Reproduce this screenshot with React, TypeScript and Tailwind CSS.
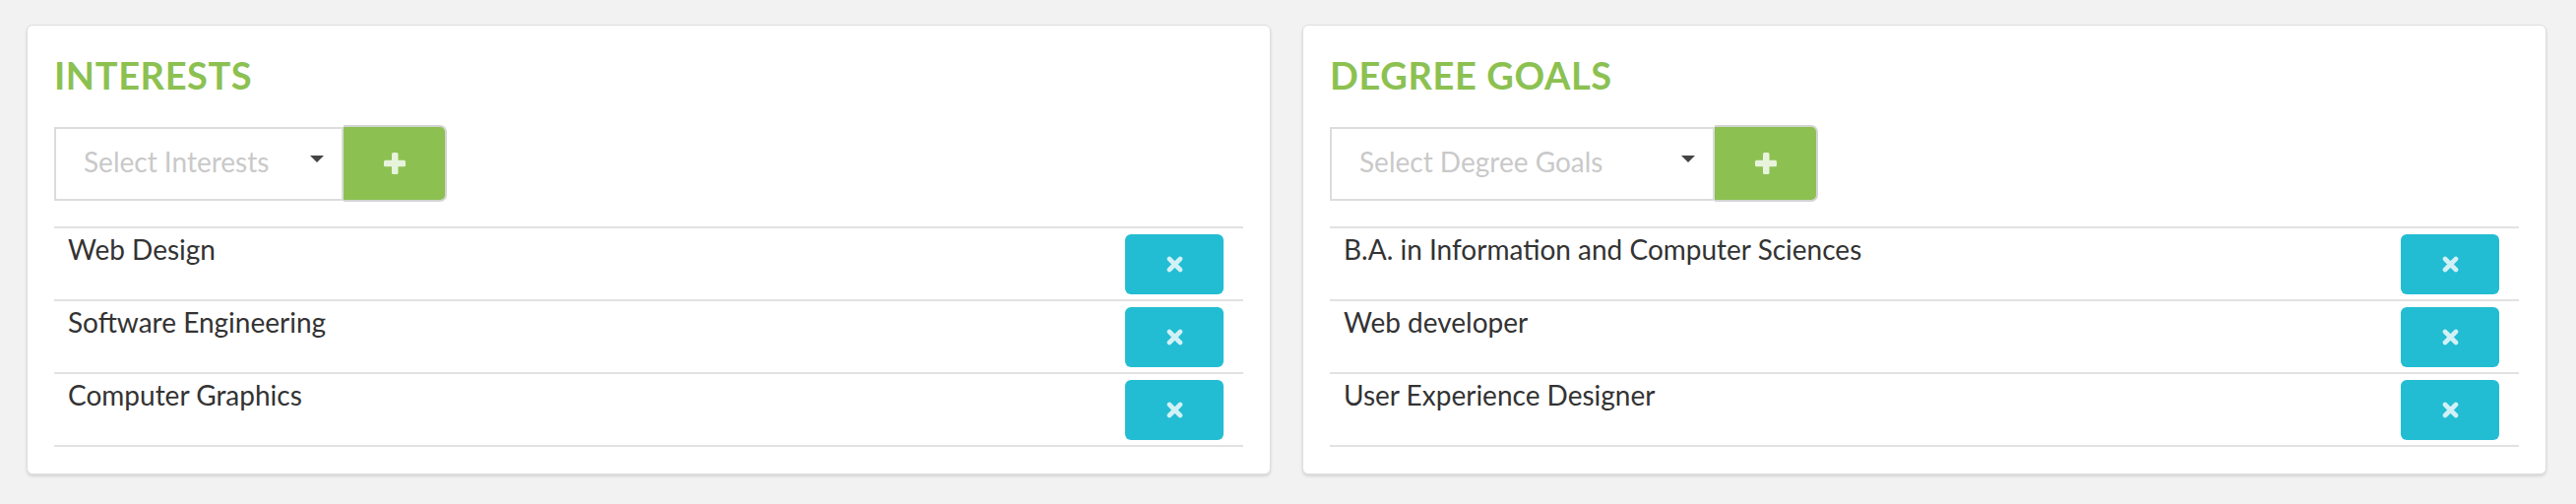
const panels = [
  {
    title: "INTERESTS",
    placeholder: "Select Interests",
    selectWidth: "w-[294px]",
    items: ["Web Design", "Software Engineering", "Computer Graphics"],
  },
  {
    title: "DEGREE GOALS",
    placeholder: "Select Degree Goals",
    selectWidth: "w-[391px]",
    items: [
      "B.A. in Information and Computer Sciences",
      "Web developer",
      "User Experience Designer",
    ],
  },
];

function PlusIcon() {
  return (
    <svg width="22" height="22" viewBox="0 0 22 22" fill="#e8f3dc">
      <rect x="8" y="0" width="6.5" height="22" rx="1.5" />
      <rect x="0" y="7.8" width="22" height="6.5" rx="1.5" />
    </svg>
  );
}

function TimesIcon() {
  return (
    <svg width="17" height="17" viewBox="0 0 17 17">
      <path
        d="M3 3 L14 14 M14 3 L3 14"
        stroke="#d2f1f6"
        strokeWidth="4.6"
        strokeLinecap="round"
      />
    </svg>
  );
}

function Panel({ title, placeholder, selectWidth, items }: (typeof panels)[number]) {
  return (
    <div className="w-[1264px] rounded-[6px] border border-[#dedede] bg-white px-[27px] pt-[30px] pb-[27px] shadow-[0_2px_3px_rgba(0,0,0,0.12)]">
      <h2 className="text-[38px] leading-[40px] font-bold tracking-[0.6px] text-[#8cc152]">{title}</h2>

      {/* select + add button */}
      <div className="mt-[31px] flex h-[78px] items-center">
        <div
          className={`${selectWidth} flex h-[75px] items-center justify-between border-2 border-[#dcdcdc] bg-white pl-[28px] pr-[18px]`}
        >
          <span className="mb-[4px] text-[28px] leading-[40px] text-[#c9c9c9]">{placeholder}</span>
          <span className="mb-[10px] h-0 w-0 border-t-[7px] border-r-[7px] border-l-[7px] border-t-[#444] border-r-transparent border-l-transparent" />
        </div>
        <button className="flex h-[78px] w-[105px] items-center justify-center rounded-r-[7px] border-2 border-l-0 border-[#d4d4d4] bg-[#8cc152]">
          <PlusIcon />
        </button>
      </div>

      {/* list */}
      <div className="mt-[25px] border-b-2 border-[#e2e2e2]">
        {items.map((item) => (
          <div
            key={item}
            className="flex h-[74px] items-start justify-between border-t-2 border-[#e2e2e2]"
          >
            <span className="mt-[1px] pl-[14px] text-[28px] leading-[40px] text-[#333]">{item}</span>
            <button className="mt-[6px] mr-[20px] flex h-[61px] w-[100px] items-center justify-center rounded-[6px] bg-[#22bdd2]">
              <TimesIcon />
            </button>
          </div>
        ))}
      </div>
    </div>
  );
}

export default function App() {
  return (
    <div className="flex min-h-[512px] items-start gap-[32px] bg-[#f2f2f2] pt-[25px] pl-[27px] pr-[30px] font-['Lato',sans-serif]">
      {panels.map((p) => (
        <Panel key={p.title} {...p} />
      ))}
    </div>
  );
}
